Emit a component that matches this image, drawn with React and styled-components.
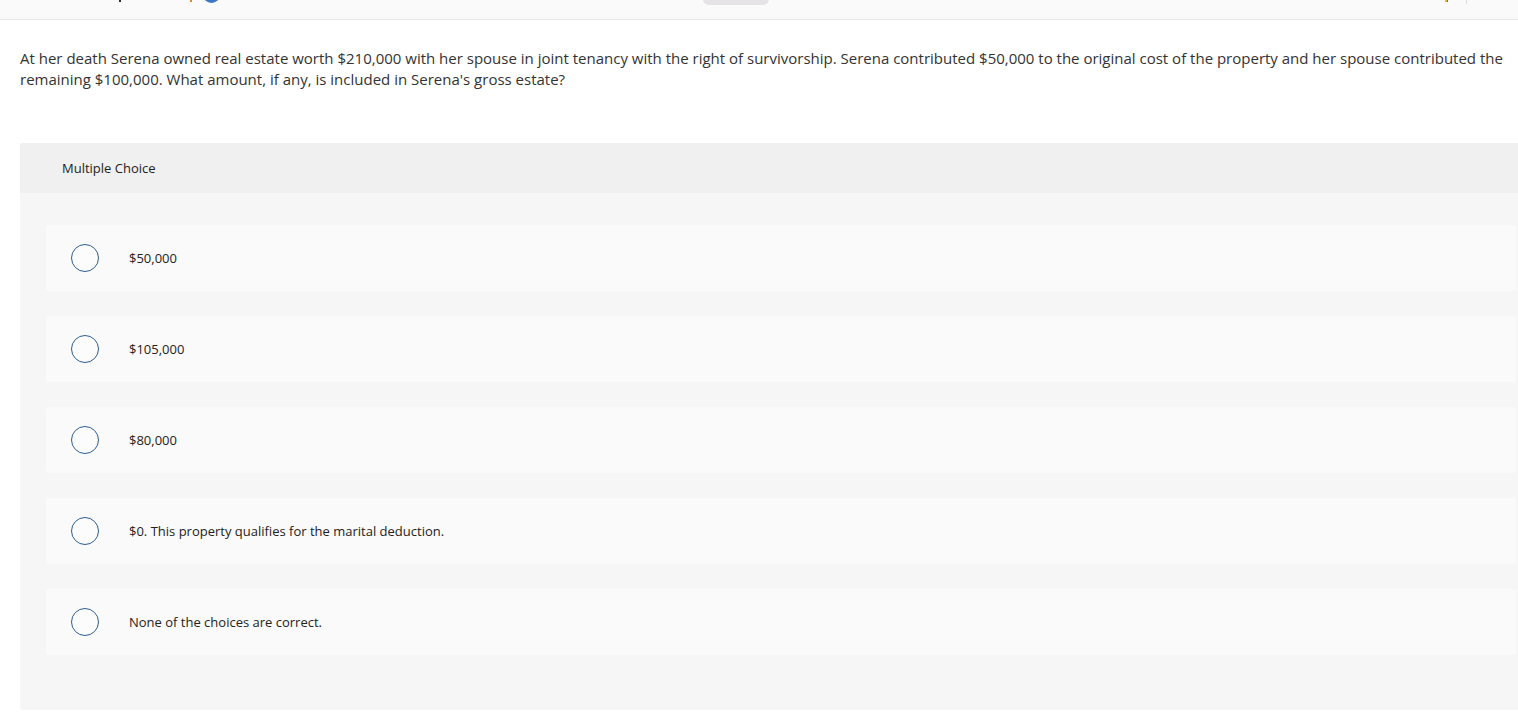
import React from "react";
import styled, { createGlobalStyle } from "styled-components";

const GlobalStyle = createGlobalStyle`
  html, body {
    margin: 0;
    padding: 0;
    background: #fff;
    font-family: "Open Sans", "Lato", sans-serif;
    color: #333;
    overflow: hidden;
  }
`;

// the header above is scrolled away; only the lower edge of its items shows
const TopBar = styled.div`
  display: flex;
  align-items: flex-start;
  height: 19px;
  background: #fafafa;
  border-bottom: 1px solid #e8e8e8;
  overflow: hidden;
`;

const Tick = styled.span`
  flex-shrink: 0;
  margin-left: ${(p) => p.$gap}px;
  width: ${(p) => p.$w || 2}px;
  height: ${(p) => p.$h || 2}px;
  background: ${(p) => p.$c};
`;

const AvatarStub = styled.span`
  flex-shrink: 0;
  margin: -14px 0 0 11px;
  width: 17px;
  height: 17px;
  border-radius: 50%;
  background: #3a78c3;
`;

const PillStub = styled.span`
  flex-shrink: 0;
  margin: -20px 0 0 483px;
  width: 66px;
  height: 25px;
  border-radius: 6px;
  background: #e5e3e6;
`;

const Question = styled.p`
  margin: 0;
  padding: 28px 12px 0 20px;
  font-size: 15px;
  line-height: 21px;
  color: #333;
`;

const Panel = styled.section`
  margin: 53px 0 0 20px;
  width: 1500px;
  height: 567px;
  background: #f6f6f6;
  border-radius: 3px 0 0 3px;
  overflow: hidden;
`;

const PanelHeader = styled.div`
  height: 50px;
  display: flex;
  align-items: center;
  padding-left: 42px;
  background: #f0f0f0;
  font-size: 13px;
  color: #222;
`;

const Choices = styled.div`
  display: flex;
  flex-direction: column;
  gap: 25px;
  padding: 32px 4px 0 26px;
`;

const Choice = styled.label`
  display: flex;
  align-items: center;
  height: 66px;
  background: #fafafa;
  border-radius: 3px;
  font-size: 13px;
  color: #222;
  cursor: pointer;
`;

const Radio = styled.span`
  box-sizing: border-box;
  width: 28px;
  height: 28px;
  margin-left: 25px;
  margin-right: 30px;
  border-radius: 50%;
  border: 1.5px solid #2d5d8f;
  background: #fcfcfc;
  flex-shrink: 0;
`;

const choices = [
  "$50,000",
  "$105,000",
  "$80,000",
  "$0. This property qualifies for the marital deduction.",
  "None of the choices are correct.",
];

export default function App() {
  return (
    <>
      <GlobalStyle />
      <TopBar>
        <Tick $gap={119} $c="#333" />
        <Tick $gap={69} $c="#e08a2c" />
        <AvatarStub />
        <PillStub />
        <Tick $gap={676} $c="#f2b81c" />
        <Tick $gap={0} $w={1} $c="#2f7fd0" />
        <Tick $gap={18} $w={1} $h={4} $c="#dcdcdc" />
      </TopBar>
      <Question>
        At her death Serena owned real estate worth $210,000 with her spouse in joint tenancy with the
        right of survivorship. Serena contributed $50,000 to the original cost of the property and her
        spouse contributed the remaining $100,000. What amount, if any, is included in Serena's gross
        estate?
      </Question>
      <Panel>
        <PanelHeader>Multiple Choice</PanelHeader>
        <Choices>
          {choices.map((c) => (
            <Choice key={c}>
              <Radio />
              {c}
            </Choice>
          ))}
        </Choices>
      </Panel>
    </>
  );
}
